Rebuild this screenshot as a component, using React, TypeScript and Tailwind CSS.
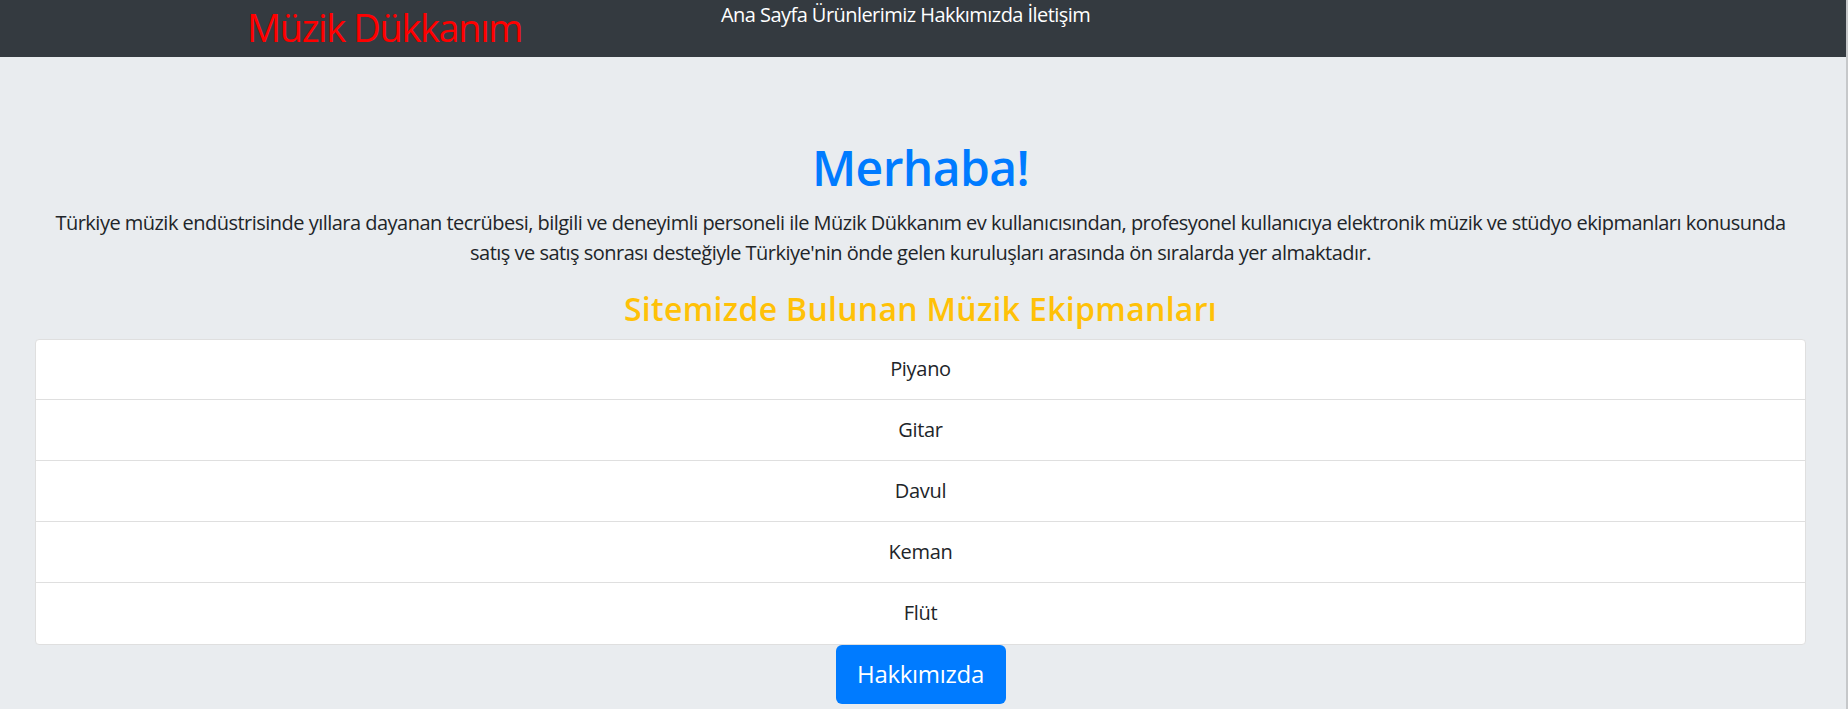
import React from 'react';

const instruments = ['Piyano', 'Gitar', 'Davul', 'Keman', 'Flüt'];

const App: React.FC = () => {
    return (
        <div className="min-h-screen bg-[#e9ecef] font-['Open_Sans',sans-serif] text-[#212529] border-r-2 border-[#c6c8ca]">
            {/* Navbar */}
            <nav className="h-[57px] bg-[#343a40] flex items-start">
                <div className="w-[721px] pl-[247px] pt-[8px] shrink-0">
                    <span className="text-[38px] leading-none tracking-[-1.4px] text-[#ff0000] whitespace-nowrap">Müzik Dükkanım</span>
                </div>
                <div className="pt-[5px] text-[20px] leading-none tracking-[-0.55px] text-white whitespace-nowrap">
                    Ana Sayfa Ürünlerimiz Hakkımızda İletişim
                </div>
            </nav>

            {/* Jumbotron */}
            <main className="pl-[35px] pr-[40px] text-center">
                <h1 className="mt-[82px] text-[48px] leading-[1.2] font-semibold tracking-[-0.6px] text-[#007bff]">Merhaba!</h1>
                <p className="mt-[11px] text-[20px] leading-[30px] tracking-[-0.52px]">
                    Türkiye müzik endüstrisinde yıllara dayanan tecrübesi, bilgili ve deneyimli personeli ile Müzik Dükkanım ev kullanıcısından, profesyonel kullanıcıya elektronik müzik ve stüdyo ekipmanları konusunda satış ve satış sonrası desteğiyle Türkiye'nin önde gelen kuruluşları arasında ön sıralarda yer almaktadır.
                </p>
                <h2 className="mt-[22px] text-[32px] leading-[1.2] font-semibold tracking-[0.3px] text-[#ffc107]">Sitemizde Bulunan Müzik Ekipmanları</h2>

                <ul className="mt-[11px] bg-white border border-[#dfdfdf] rounded-[4px] divide-y divide-[#dfdfdf]">
                    {instruments.map(item => (
                        <li key={item} className="h-[61px] first:h-[60px] flex items-center justify-center text-[20px] tracking-[-0.3px]">
                            {item}
                        </li>
                    ))}
                </ul>

                <div className="flex justify-center">
                    <button className="w-[170px] h-[59px] bg-[#007bff] text-white text-[24px] tracking-[-0.3px] rounded-[6px]">
                        Hakkımızda
                    </button>
                </div>
            </main>
        </div>
    );
};

export default App;
